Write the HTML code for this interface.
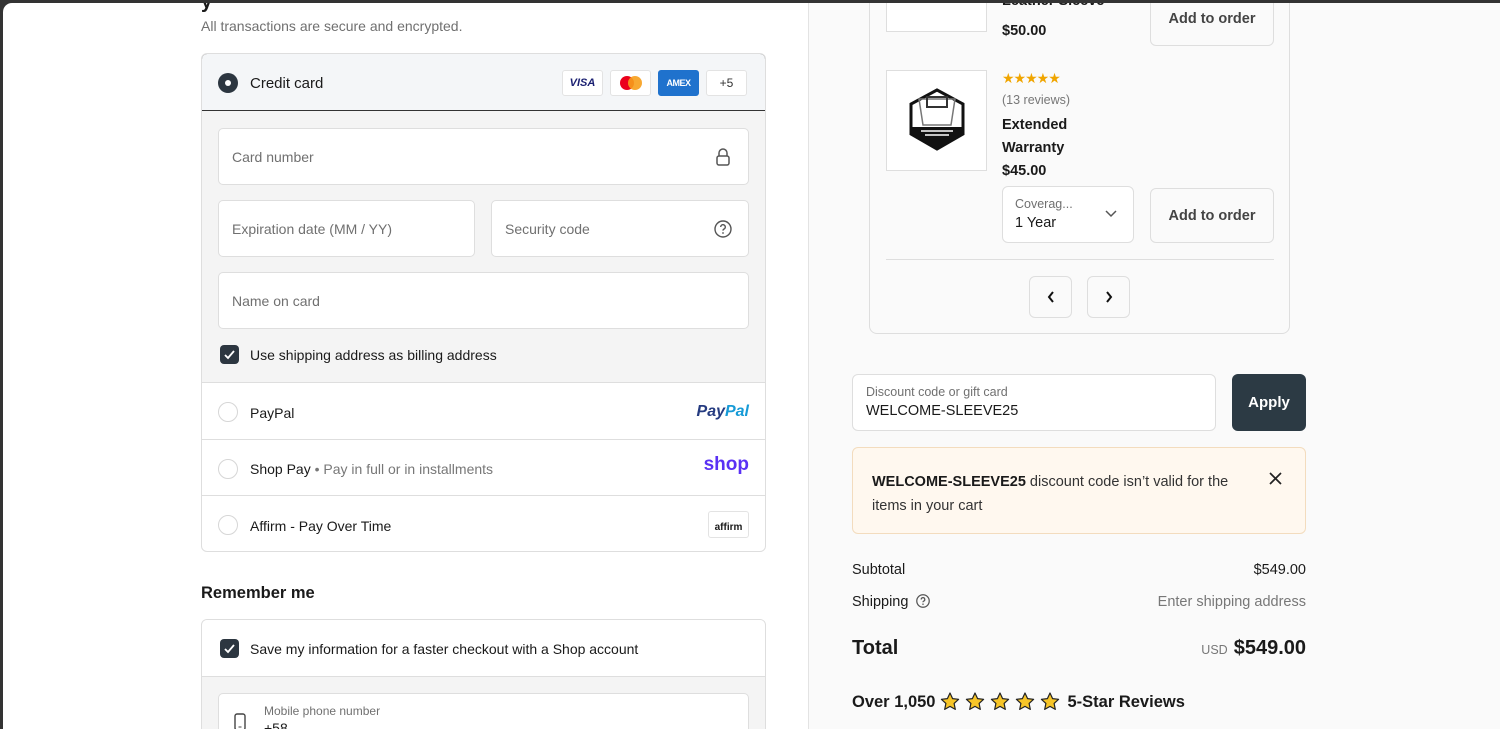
<!DOCTYPE html>
<html><head><meta charset="utf-8"><style>
*{box-sizing:border-box;margin:0;padding:0}
body{width:1500px;height:729px;overflow:hidden;background:#333;font-family:"Liberation Sans",sans-serif;font-size:14px;color:#1a1a1a;position:relative}
.a{position:absolute}
#page{position:absolute;left:3px;top:3px;right:0;bottom:0;background:#fff;border-top-left-radius:9px;overflow:hidden}
#right{position:absolute;left:805px;top:0;right:0;bottom:0;background:#fafafa;border-left:1px solid #e3e3e3}
.inp{position:absolute;background:#fff;border:1px solid #dedede;border-radius:5px;color:#707070;padding-left:13px;display:flex;align-items:center}
.cb{position:absolute;width:19px;height:19px;background:#2c3640;border-radius:4px}
.cb svg{position:absolute;left:3px;top:3px}
.radio{position:absolute;width:20px;height:20px;border:1px solid #d6d6d6;border-radius:50%;background:#fff}
.btn{position:absolute;border:1px solid #dedede;border-radius:6px;background:#fafafa;color:#444;font-weight:bold;display:flex;align-items:center;justify-content:center;font-size:14.5px}
.logo{position:absolute;top:16px;width:41px;height:26px;border:1px solid #e3e3e3;border-radius:3px;background:#fff;display:flex;align-items:center;justify-content:center}
</style></head><body>
<div id="page">
  <div class="a" style="left:198px;top:-12px;font-size:20px;font-weight:bold">y</div>
  <div class="a" style="left:198px;top:15px;color:#707070;font-size:14px">All transactions are secure and encrypted.</div>

  <div class="a" style="left:198px;top:50px;width:565px;height:499px;border:1px solid #dedede;border-radius:6px;overflow:hidden;background:#fff">
    <div class="a" style="left:-1px;top:-1px;width:565px;height:58px;border:1px solid #333;border-radius:6px 6px 0 0;background:#f4f6f8">
      <div class="a" style="left:16px;top:19px;width:20px;height:20px;border-radius:50%;background:#2c3640"><div class="a" style="left:7px;top:7px;width:6px;height:6px;background:#fff;border-radius:50%"></div></div>
      <div class="a" style="left:48px;top:21px;font-size:15px">Credit card</div>
      <div class="logo" style="left:360px"><span style="color:#1a1f71;font-weight:bold;font-style:italic;font-size:11px">VISA</span></div>
      <div class="logo" style="left:408px"><svg width="26" height="16"><circle cx="9" cy="8" r="7" fill="#eb001b"/><circle cx="17" cy="8" r="7" fill="#f79e1b" opacity=".9"/></svg></div>
      <div class="logo" style="left:456px;background:#1f72cd;border-color:#1f72cd"><span style="color:#fff;font-weight:bold;font-size:9px;letter-spacing:-.5px">AMEX</span></div>
      <div class="logo" style="left:504px;font-size:12px;color:#333">+5</div>
    </div>
    <div class="a" style="left:0;top:57px;width:563px;height:272px;background:#f4f4f4;border-bottom:1px solid #dedede"></div>
    <div class="inp" style="left:16px;top:74px;width:531px;height:57px">Card number
      <svg class="a" style="right:17px;top:19px" width="16" height="18" viewBox="0 0 16 18"><path d="M4 8V5a4 4 0 0 1 8 0v3" fill="none" stroke="#555" stroke-width="1.5"/><rect x="2" y="8" width="12" height="9" rx="2" fill="none" stroke="#555" stroke-width="1.5"/></svg></div>
    <div class="inp" style="left:16px;top:146px;width:257px;height:57px">Expiration date (MM / YY)</div>
    <div class="inp" style="left:289px;top:146px;width:258px;height:57px">Security code
      <svg class="a" style="right:16px;top:19px" width="18" height="18" viewBox="0 0 18 18"><circle cx="9" cy="9" r="8" fill="none" stroke="#555" stroke-width="1.4"/><path d="M6.7 7a2.3 2.3 0 1 1 3 2.2c-.6.3-.7.7-.7 1.4" fill="none" stroke="#555" stroke-width="1.4"/><circle cx="9" cy="13" r=".9" fill="#555"/></svg></div>
    <div class="inp" style="left:16px;top:218px;width:531px;height:57px">Name on card</div>
    <div class="cb" style="left:18px;top:291px"><svg width="13" height="13"><path d="M2 7l3 3 6-7" fill="none" stroke="#fff" stroke-width="1.8"/></svg></div>
    <div class="a" style="left:48px;top:293px">Use shipping address as billing address</div>

    <div class="radio" style="left:16px;top:348px"></div>
    <div class="a" style="left:48px;top:351px">PayPal</div>
    <div class="a" style="right:16px;top:349px;font-weight:bold;font-style:italic;font-size:16px"><span style="color:#253b80">Pay</span><span style="color:#179bd7">Pal</span></div>
    <div class="a" style="left:0;top:385px;width:563px;border-top:1px solid #dedede"></div>
    <div class="radio" style="left:16px;top:405px"></div>
    <div class="a" style="left:48px;top:407px">Shop Pay <span style="color:#777">• Pay in full or in installments</span></div>
    <div class="a" style="right:16px;top:400px;font-weight:bold;font-size:19px;color:#5a31f4">shop</div>
    <div class="a" style="left:0;top:441px;width:563px;border-top:1px solid #dedede"></div>
    <div class="radio" style="left:16px;top:461px"></div>
    <div class="a" style="left:48px;top:464px">Affirm - Pay Over Time</div>
    <div class="a" style="right:16px;top:457px;width:41px;height:27px;border:1px solid #e3e3e3;border-radius:3px;font-size:10px;font-weight:bold;display:flex;align-items:flex-end;justify-content:center;padding-bottom:4px">affirm</div>
  </div>

  <div class="a" style="left:198px;top:581px;font-size:16.5px;font-weight:bold">Remember me</div>
  <div class="a" style="left:198px;top:616px;width:565px;height:130px;border:1px solid #dedede;border-radius:6px;overflow:hidden;background:#f4f4f4">
    <div class="a" style="left:0;top:0;width:563px;height:57px;background:#fff;border-bottom:1px solid #dedede"></div>
    <div class="cb" style="left:18px;top:19px"><svg width="13" height="13"><path d="M2 7l3 3 6-7" fill="none" stroke="#fff" stroke-width="1.8"/></svg></div>
    <div class="a" style="left:48px;top:21px">Save my information for a faster checkout with a Shop account</div>
    <div class="a" style="left:16px;top:73px;width:531px;height:60px;background:#fff;border:1px solid #dedede;border-radius:5px">
      <svg class="a" style="left:15px;top:19px" width="12" height="18"><rect x="1" y="1" width="10" height="16" rx="2" fill="none" stroke="#444" stroke-width="1.4"/><path d="M4.5 14h3" stroke="#444"/></svg>
      <div class="a" style="left:45px;top:10px;font-size:12px;color:#707070">Mobile phone number</div>
      <div class="a" style="left:45px;top:26px">+58</div>
    </div>
  </div>

  <div id="right">
    <div class="a" style="left:60px;top:-20px;width:421px;height:351px;border:1px solid #dedede;border-radius:8px">
      <div class="a" style="left:16px;top:-1px;width:101px;height:49px;background:#fff;border:1px solid #dedede;border-top:none"></div>
      <div class="a" style="left:132px;top:9px;font-weight:bold;font-size:14.5px">Leather Sleeve</div>
      <div class="a" style="left:132px;top:39px;font-weight:bold;font-size:14.5px">$50.00</div>
      <div class="btn" style="left:280px;top:8px;width:124px;height:54px">Add to order</div>
      <div class="a" style="left:16px;top:86px;width:101px;height:101px;background:#fff;border:1px solid #dedede">
        <svg class="a" style="left:20px;top:16px" width="60" height="66" viewBox="0 0 60 66"><path d="M30 3l26 14v30L30 62 4 47V17z" fill="#fff" stroke="#111" stroke-width="3"/><path d="M12 12h36l-4 26H16z" fill="none" stroke="#777" stroke-width="1.5"/><rect x="20" y="10" width="20" height="10" fill="none" stroke="#333" stroke-width="2"/><path d="M4 40h52v7L30 62 4 47z" fill="#111"/><path d="M14 44h32M18 48h24" stroke="#fff" stroke-width="1.5"/></svg>
      </div>
      <div class="a" style="left:132px;top:86px;color:#f0a500;font-size:14px;letter-spacing:-1px">★★★★★</div>
      <div class="a" style="left:132px;top:109px;color:#777;font-size:12.5px">(13 reviews)</div>
      <div class="a" style="left:132px;top:130px;font-weight:bold;font-size:14.5px;line-height:23px">Extended<br>Warranty<br>$45.00</div>
      <div class="a" style="left:132px;top:202px;width:132px;height:57px;background:#fff;border:1px solid #dedede;border-radius:6px">
        <div class="a" style="left:12px;top:10px;font-size:12.5px;color:#707070">Coverag...</div>
        <div class="a" style="left:12px;top:28px;font-size:14.5px">1 Year</div>
        <svg class="a" style="left:102px;top:23px" width="12" height="8"><path d="M1 1l5 5 5-5" fill="none" stroke="#555" stroke-width="1.5"/></svg>
      </div>
      <div class="btn" style="left:280px;top:204px;width:124px;height:55px">Add to order</div>
      <div class="a" style="left:16px;top:275px;width:388px;border-top:1px solid #dedede"></div>
      <div class="btn" style="left:159px;top:292px;width:43px;height:42px"><svg width="8" height="12"><path d="M6 1L2 6l4 5" fill="none" stroke="#111" stroke-width="2"/></svg></div>
      <div class="btn" style="left:217px;top:292px;width:43px;height:42px"><svg width="8" height="12"><path d="M2 1l4 5-4 5" fill="none" stroke="#111" stroke-width="2"/></svg></div>
    </div>

    <div class="a" style="left:43px;top:371px;width:364px;height:57px;background:#fff;border:1px solid #dedede;border-radius:6px">
      <div class="a" style="left:13px;top:10px;font-size:12.5px;color:#707070">Discount code or gift card</div>
      <div class="a" style="left:13px;top:28px;font-size:14.5px">WELCOME-SLEEVE25</div>
    </div>
    <div class="a" style="left:423px;top:371px;width:74px;height:57px;background:#2c3a44;border-radius:6px;color:#fff;font-weight:bold;font-size:15px;display:flex;align-items:center;justify-content:center">Apply</div>
    <div class="a" style="left:43px;top:444px;width:454px;height:87px;background:#fff8ef;border:1px solid #f3dcbe;border-radius:6px">
      <div class="a" style="left:19px;top:22px;width:360px;font-size:14.5px;line-height:24px;color:#333"><b style="color:#1a1a1a">WELCOME-SLEEVE25</b> discount code isn’t valid for the items in your cart</div>
      <svg class="a" style="left:416px;top:24px" width="13" height="13"><path d="M1 1l11 11M12 1L1 12" stroke="#222" stroke-width="1.7"/></svg>
    </div>
    <div class="a" style="left:43px;top:559px;font-size:14.5px">Subtotal</div>
    <div class="a" style="right:194px;top:559px;font-size:14.5px">$549.00</div>
    <div class="a" style="left:43px;top:591px;font-size:14.5px">Shipping
      <svg style="vertical-align:-2px;margin-left:4px" width="14" height="14" viewBox="0 0 18 18"><circle cx="9" cy="9" r="8" fill="none" stroke="#555" stroke-width="1.6"/><path d="M6.7 7a2.3 2.3 0 1 1 3 2.2c-.6.3-.7.7-.7 1.4" fill="none" stroke="#555" stroke-width="1.6"/><circle cx="9" cy="13" r="1" fill="#555"/></svg></div>
    <div class="a" style="right:194px;top:591px;font-size:14.5px;color:#777">Enter shipping address</div>
    <div class="a" style="left:43px;top:634px;font-size:20px;font-weight:bold">Total</div>
    <div class="a" style="right:194px;top:634px;font-size:20px;font-weight:bold"><span style="font-size:12.5px;font-weight:normal;color:#777;margin-right:6px">USD</span>$549.00</div>
    <div class="a" style="left:43px;top:688px;font-size:16.5px;font-weight:bold;display:flex;align-items:center;gap:4px">Over 1,050
      <svg width="124" height="22" viewBox="0 0 124 22"><g fill="#f7c528" stroke="#222" stroke-width="1.2" stroke-linejoin="round">
      <path d="M11 2l2.6 5.6 6 .7-4.5 4.1 1.2 6L11 15.4l-5.3 3 1.2-6L2.4 8.3l6-.7z"/>
      <path transform="translate(25 0)" d="M11 2l2.6 5.6 6 .7-4.5 4.1 1.2 6L11 15.4l-5.3 3 1.2-6L2.4 8.3l6-.7z"/>
      <path transform="translate(50 0)" d="M11 2l2.6 5.6 6 .7-4.5 4.1 1.2 6L11 15.4l-5.3 3 1.2-6L2.4 8.3l6-.7z"/>
      <path transform="translate(75 0)" d="M11 2l2.6 5.6 6 .7-4.5 4.1 1.2 6L11 15.4l-5.3 3 1.2-6L2.4 8.3l6-.7z"/>
      <path transform="translate(100 0)" d="M11 2l2.6 5.6 6 .7-4.5 4.1 1.2 6L11 15.4l-5.3 3 1.2-6L2.4 8.3l6-.7z"/></g></svg>
      5-Star Reviews</div>
  </div>
</div>
</body></html>
